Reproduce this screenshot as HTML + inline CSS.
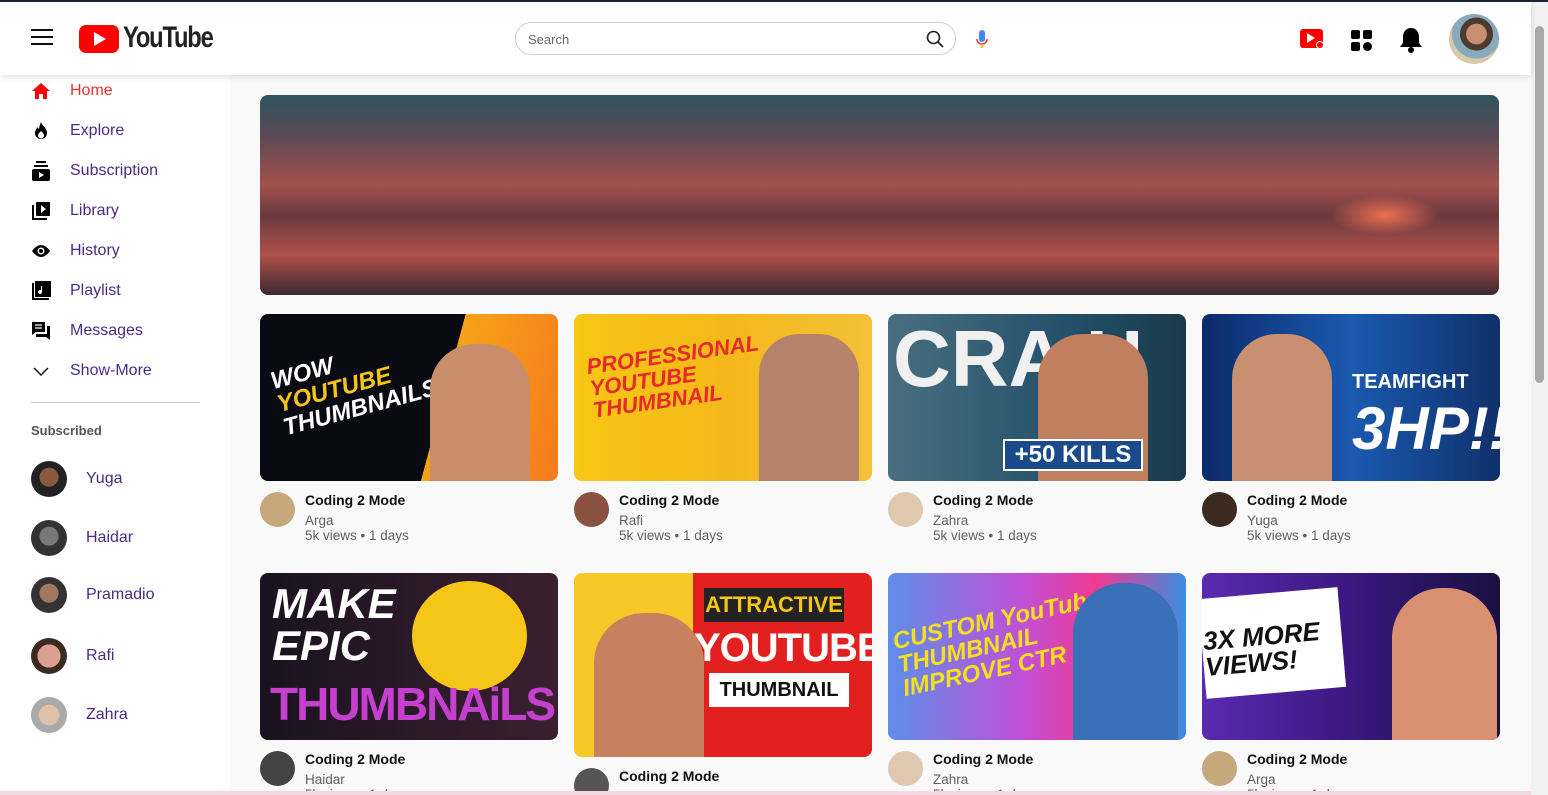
<!DOCTYPE html>
<html><head><meta charset="utf-8"><style>
*{box-sizing:border-box;margin:0;padding:0}
html,body{width:1548px;height:795px;overflow:hidden}
body{background:#f9f9f9;font-family:"Liberation Sans",Arial,sans-serif;position:relative}
.topline{position:absolute;left:0;top:0;width:1548px;height:2px;background:#1c2333}
header{position:absolute;left:0;top:2px;width:1531px;height:73px;background:#fff;box-shadow:0 2px 6px rgba(0,0,0,.12);z-index:2}
.side{position:absolute;left:0;top:75px;width:230px;height:720px;background:#fff}
.item{position:absolute;left:31px;height:20px;display:flex;align-items:center;font-size:16px;color:#4b2a86}
.item svg{width:20px;height:20px;margin-right:19px}
.sub{position:absolute;left:31px;display:flex;align-items:center;font-size:16px;color:#4b2a86}
.sub .av{width:36px;height:36px;border-radius:50%;margin-right:19px}
.card{position:absolute;width:298px}
.th{width:298px;height:167px;border-radius:8px;overflow:hidden;position:relative}
.meta{position:absolute;left:0;top:178px;width:298px}
.meta .av{position:absolute;left:0;top:0;width:35px;height:35px;border-radius:50%}
.meta .t{position:absolute;left:45px;top:0;font-size:14px;font-weight:bold;color:#111}
.meta .c{position:absolute;left:45px;top:21px;font-size:13.5px;color:#606060;line-height:15px}
.scroll{position:absolute;right:0;top:2px;width:17px;height:793px;background:#f1f1f1}
.thumb{position:absolute;right:4px;top:24px;width:9px;height:357px;background:#a8a8a8;border-radius:5px}
.big{position:absolute;font-weight:900;font-family:"Liberation Sans",sans-serif;font-style:italic;line-height:1;white-space:nowrap}
</style></head><body>
<div class="topline"></div>
<header>
 <div style="position:absolute;left:31px;top:27px;width:22px;height:2px;background:#111;box-shadow:0 7px 0 #111,0 14px 0 #111"></div>
 <div style="position:absolute;left:79px;top:23px;width:40px;height:28px;background:#f00;border-radius:7px"></div>
 <div style="position:absolute;left:94px;top:30px;width:0;height:0;border-left:12px solid #fff;border-top:7px solid transparent;border-bottom:7px solid transparent"></div>
 <div style="position:absolute;left:123px;top:19px;font-size:30px;font-weight:bold;letter-spacing:-1.5px;color:#222;transform:scaleX(.79);transform-origin:left">YouTube</div>
 <div style="position:absolute;left:515px;top:20px;width:441px;height:33px;border:1px solid #ccc;border-radius:17px;font-size:13px;color:#666;padding:9px 12px">Search</div>
 <svg style="position:absolute;left:926px;top:28px" width="18" height="18" viewBox="0 0 18 18"><circle cx="7.5" cy="7.5" r="6" fill="none" stroke="#222" stroke-width="1.6"/><path d="M12 12l5 5" stroke="#222" stroke-width="1.8"/></svg>
 <svg style="position:absolute;left:975px;top:27px" width="14" height="22" viewBox="0 0 14 22"><rect x="4" y="1" width="6" height="12" rx="3" fill="#4285f4"/><path d="M2 10a5 5 0 0 0 10 0" fill="none" stroke="#ea4335" stroke-width="1.6"/><path d="M7 15v4" stroke="#fbbc05" stroke-width="2"/></svg>
 <div style="position:absolute;left:1300px;top:27px;width:23px;height:19px;background:#f00;border-radius:3px"></div>
 <div style="position:absolute;left:1307px;top:31px;border-left:8px solid #fff;border-top:5px solid transparent;border-bottom:5px solid transparent"></div>
 <div style="position:absolute;left:1316px;top:39px;width:8px;height:8px;border-radius:50%;background:#f00;border:1.5px solid #fff"></div>
 <svg style="position:absolute;left:1351px;top:28px" width="21" height="21" viewBox="0 0 21 21"><rect x="0" y="0" width="9" height="9" rx="2"/><rect x="12" y="0" width="9" height="9" rx="2"/><rect x="0" y="12" width="9" height="9" rx="2"/><circle cx="16.5" cy="16.5" r="4.5"/></svg>
 <svg style="position:absolute;left:1400px;top:25px" width="22" height="26" viewBox="0 0 22 26"><path d="M11 1c-5 0-8 4-8 9v6l-3 4h22l-3-4v-6c0-5-3-9-8-9z"/><circle cx="11" cy="23" r="3"/></svg>
 <div style="position:absolute;left:1449px;top:12px;width:50px;height:50px;border-radius:50%;background:radial-gradient(circle at 55% 40%,#c89070 0 25%,#4a3a30 26% 40%,#8ab 41% 60%,#d8c9a8 61%)"></div>
</header>
<div class="side">
 <div class="item" style="top:6px;color:#e8312a"><svg viewBox="0 0 20 20"><path d="M10 2L1 10h3v8h4v-5h4v5h4v-8h3z" fill="#f00"/></svg>Home</div>
 <div class="item" style="top:46px"><svg viewBox="0 0 20 20"><path d="M10 1c1 4 6 6 6 11a6 6 0 0 1-12 0c0-3 2-4 2-6 1 1 2 2 2 3 0-3 1-6 2-8zm0 9c-2 2-3 3-3 4.5a3 3 0 0 0 6 0c0-1.5-1-2.5-3-4.5z"/></svg>Explore</div>
 <div class="item" style="top:86px"><svg viewBox="0 0 20 20"><rect x="5" y="0" width="10" height="2"/><rect x="3" y="4" width="14" height="2"/><rect x="1" y="8" width="18" height="12" rx="2"/><path d="M8 11v6l5-3z" fill="#fff"/></svg>Subscription</div>
 <div class="item" style="top:126px"><svg viewBox="0 0 20 20"><path d="M1 4v15h15v-2H3V4z"/><rect x="5" y="1" width="14" height="14" rx="1"/><path d="M10 4v8l5-4z" fill="#fff"/></svg>Library</div>
 <div class="item" style="top:166px"><svg viewBox="0 0 20 20"><path d="M10 4C5 4 1 10 1 10s4 6 9 6 9-6 9-6-4-6-9-6z"/><circle cx="10" cy="10" r="3.5" fill="#fff"/><circle cx="10" cy="10" r="2"/></svg>History</div>
 <div class="item" style="top:206px"><svg viewBox="0 0 20 20"><path d="M1 2v17h17v-2H3V2z"/><rect x="4" y="0" width="16" height="16"/><path d="M11 5v6a2 2 0 1 1-1-1.7V5z" fill="#fff"/></svg>Playlist</div>
 <div class="item" style="top:246px"><svg viewBox="0 0 20 20"><path d="M1 1h13v10H5l-4 3z"/><path d="M16 5h3v14l-4-3H5v-3h11z"/><path d="M4 4h7M4 7h7" stroke="#fff" stroke-width="1.3"/></svg>Messages</div>
 <div class="item" style="top:286px"><svg viewBox="0 0 20 20"><path d="M3 7l7 7 7-7" fill="none" stroke="#111" stroke-width="1.5"/></svg>Show-More</div>
 <div style="position:absolute;left:31px;top:327px;width:169px;height:1px;background:#ccc"></div>
 <div style="position:absolute;left:31px;top:348px;font-size:13px;font-weight:bold;color:#555">Subscribed</div>
 <div class="sub" style="top:386px"><div class="av" style="background:radial-gradient(circle at 50% 45%,#8a5a40 0 35%,#222 36%)"></div>Yuga</div>
 <div class="sub" style="top:445px"><div class="av" style="background:radial-gradient(circle at 50% 45%,#777 0 35%,#333 36%)"></div>Haidar</div>
 <div class="sub" style="top:502px"><div class="av" style="background:radial-gradient(circle at 50% 45%,#a07860 0 35%,#333 36%)"></div>Pramadio</div>
 <div class="sub" style="top:563px"><div class="av" style="background:radial-gradient(circle at 50% 50%,#d9a090 0 45%,#3a2a22 46%)"></div>Rafi</div>
 <div class="sub" style="top:622px"><div class="av" style="background:radial-gradient(circle at 50% 50%,#e0c0a8 0 40%,#aaa 41%)"></div>Zahra</div>
</div>
<div style="position:absolute;left:260px;top:95px;width:1239px;height:200px;border-radius:8px;background:linear-gradient(180deg,#2f5460 0%,#5a4a55 20%,#a4504c 45%,#6a3a40 60%,#b0504a 80%,#3a2a30 100%)"></div>
<div style="position:absolute;left:1330px;top:195px;width:110px;height:40px;border-radius:50%;background:radial-gradient(#f07050,rgba(200,80,60,0) 70%)"></div>

<div class="card" style="left:260px;top:314px"><div class="th" style="background:linear-gradient(105deg,#0a0a12 0 60%,#f6a21a 60%,#f57a1c)"><div class="big" style="left:15px;top:35px;font-size:24px;color:#fff;transform:rotate(-15deg)">WOW<br><span style="color:#f5c518">YOUTUBE</span><br>THUMBNAILS</div><div style="position:absolute;left:170px;top:30px;width:100px;height:137px;background:#c98d6c;border-radius:45px 45px 0 0"></div></div>
<div class="meta"><div class="av" style="background:#c7a87c"></div><div class="t">Coding 2 Mode</div><div class="c">Arga<br>5k views • 1 days</div></div></div>
<div class="card" style="left:574px;top:314px"><div class="th" style="background:linear-gradient(90deg,#f8c614,#f5b81a 50%,#f4c038)"><div class="big" style="left:15px;top:30px;font-size:22px;color:#e42b2b;transform:rotate(-8deg)">PROFESSIONAL<br>YOUTUBE<br>THUMBNAIL</div><div style="position:absolute;left:185px;top:20px;width:100px;height:147px;background:#b4836a;border-radius:40px 40px 0 0"></div></div>
<div class="meta"><div class="av" style="background:#8a5040"></div><div class="t">Coding 2 Mode</div><div class="c">Rafi<br>5k views • 1 days</div></div></div>
<div class="card" style="left:888px;top:314px"><div class="th" style="background:linear-gradient(90deg,#4a6e80,#23506a 60%,#1a3a4a)"><div class="big" style="left:5px;top:5px;font-size:80px;color:#f0f0f0;font-style:normal">CRA H</div><div style="position:absolute;left:150px;top:20px;width:110px;height:147px;background:#c08060;border-radius:45px 45px 0 0"></div><div style="position:absolute;left:115px;top:125px;width:140px;height:32px;background:#1a4a8a;border:2px solid #fff;color:#fff;font-weight:bold;font-size:24px;text-align:center">+50 KILLS</div></div>
<div class="meta"><div class="av" style="background:#e0c8b0"></div><div class="t">Coding 2 Mode</div><div class="c">Zahra<br>5k views • 1 days</div></div></div>
<div class="card" style="left:1202px;top:314px"><div class="th" style="background:linear-gradient(90deg,#0c2a6a,#1a5ab0 50%,#10306a)"><div style="position:absolute;left:30px;top:20px;width:100px;height:147px;background:#c89070;border-radius:45px 45px 0 0"></div><div class="big" style="left:150px;top:58px;font-size:20px;color:#fff;font-style:normal">TEAMFIGHT</div><div class="big" style="left:150px;top:85px;font-size:60px;color:#fff">3HP!!</div></div>
<div class="meta"><div class="av" style="background:#3a2a20"></div><div class="t">Coding 2 Mode</div><div class="c">Yuga<br>5k views • 1 days</div></div></div>

<div class="card" style="left:260px;top:573px"><div class="th" style="background:linear-gradient(90deg,#1a1220,#3a2030)"><div style="position:absolute;left:152px;top:8px;width:115px;height:110px;border-radius:50%;background:#f5c518"></div><div class="big" style="left:12px;top:10px;font-size:42px;color:#fff">MAKE<br>EPIC</div><div class="big" style="left:10px;top:108px;font-size:46px;color:#c640d0;font-style:normal;letter-spacing:-2px">THUMBNAiLS</div></div>
<div class="meta"><div class="av" style="background:#444"></div><div class="t">Coding 2 Mode</div><div class="c">Haidar<br>5k views • 1 days</div></div></div>
<div class="card" style="left:574px;top:573px"><div class="th" style="height:184px;background:linear-gradient(90deg,#f8c828 0 40%,#e32020 40%)"><div style="position:absolute;left:20px;top:40px;width:110px;height:144px;background:#c88060;border-radius:50px 50px 0 0"></div><div style="position:absolute;left:130px;top:15px;width:140px;height:34px;background:#222;color:#f5c518;font-weight:900;font-size:22px;line-height:34px;text-align:center">ATTRACTIVE</div><div class="big" style="left:120px;top:55px;font-size:40px;color:#fff;font-style:normal;letter-spacing:-1px">YOUTUBE</div><div style="position:absolute;left:135px;top:100px;width:140px;height:34px;background:#fff;color:#111;font-weight:900;font-size:20px;line-height:34px;text-align:center">THUMBNAIL</div></div>
<div class="meta" style="top:195px"><div class="av" style="background:#555"></div><div class="t">Coding 2 Mode</div></div></div>
<div class="card" style="left:888px;top:573px"><div class="th" style="background:linear-gradient(90deg,#5e8ee8,#c050d8 45%,#f03a90 70%,#3a8ee0)"><div class="big" style="left:8px;top:35px;font-size:24px;color:#f5e020;transform:rotate(-12deg)">CUSTOM YouTube<br>THUMBNAIL<br>IMPROVE CTR</div><div style="position:absolute;left:185px;top:10px;width:105px;height:157px;background:#3a70b8;border-radius:50px 50px 0 0"></div></div>
<div class="meta"><div class="av" style="background:#e0c8b0"></div><div class="t">Coding 2 Mode</div><div class="c">Zahra<br>5k views • 1 days</div></div></div>
<div class="card" style="left:1202px;top:573px"><div class="th" style="background:linear-gradient(90deg,#5a2ab0,#3a1880 50%,#1a1040)"><div style="position:absolute;left:0;top:20px;width:140px;height:100px;background:#fff;transform:rotate(-5deg)"></div><div class="big" style="left:2px;top:50px;font-size:26px;color:#111;transform:rotate(-5deg)">3X MORE<br>VIEWS!</div><div style="position:absolute;left:190px;top:15px;width:105px;height:152px;background:#d89070;border-radius:50px 50px 0 0"></div></div>
<div class="meta"><div class="av" style="background:#c7a87c"></div><div class="t">Coding 2 Mode</div><div class="c">Arga<br>5k views • 1 days</div></div></div>

<div class="scroll"><div class="thumb"></div></div>
<div style="position:absolute;left:0;top:791px;width:1531px;height:4px;background:#f3d8e4"></div>
</body></html>
